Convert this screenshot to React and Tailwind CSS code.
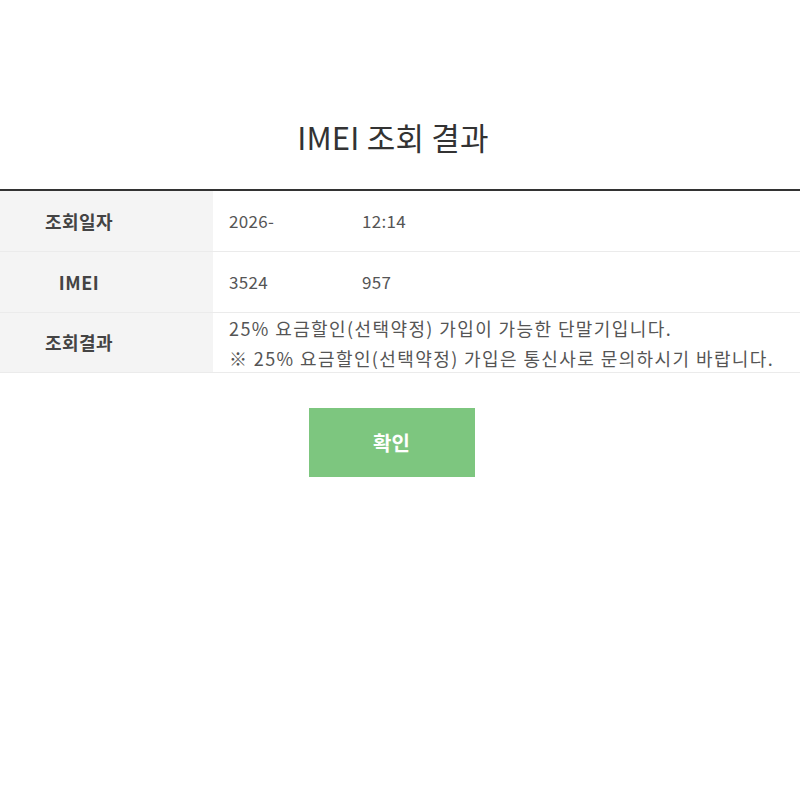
const rows = [
  { label: '조회일자', left: '2026-', right: '12:14' },
  { label: 'IMEI', left: '3524', right: '957' },
];

export default function App() {
  return (
    <div className="min-h-[800px] bg-white font-['Noto_Sans_CJK_KR','Noto_Sans',sans-serif] text-[#333]">
      <h1 className="pt-[112px] pr-[14px] text-center text-[31px] leading-[50px] font-normal tracking-[0.2px] text-[#333]">
        IMEI 조회 결과
      </h1>

      <div className="mt-[27px] border-t-2 border-[#333]">
        {rows.map((r) => (
          <div key={r.label} className="flex h-[61px] border-b border-[#ebebeb]">
            <div className="flex w-[213px] shrink-0 items-center justify-center bg-[#f4f4f4] pr-[55px] text-[18px] font-bold tracking-[0.5px] text-[#444]">
              {r.label}
            </div>
            <div className="flex items-center pl-[16px] text-[17px] tracking-[0.3px] text-[#555]">
              <span className="w-[133px] overflow-hidden whitespace-nowrap">{r.left}</span>
              <span>{r.right}</span>
            </div>
          </div>
        ))}
        <div className="flex h-[60px] border-b border-[#ebebeb]">
          <div className="flex w-[213px] shrink-0 items-center justify-center bg-[#f4f4f4] pr-[55px] text-[18px] font-bold tracking-[0.5px] text-[#444]">
            조회결과
          </div>
          <div className="flex flex-col justify-center pl-[16px] text-[18px] leading-[30px] tracking-[1.4px] text-[#555]">
            <p>25% 요금할인(선택약정) 가입이 가능한 단말기입니다.</p>
            <p>※ 25% 요금할인(선택약정) 가입은 통신사로 문의하시기 바랍니다.</p>
          </div>
        </div>
      </div>

      <div className="mt-[35px] flex justify-center">
        <button className="ml-[-17px] h-[69px] w-[166px] bg-[#7dc67f] text-[20px] font-bold text-white">
          확인
        </button>
      </div>
    </div>
  );
}
